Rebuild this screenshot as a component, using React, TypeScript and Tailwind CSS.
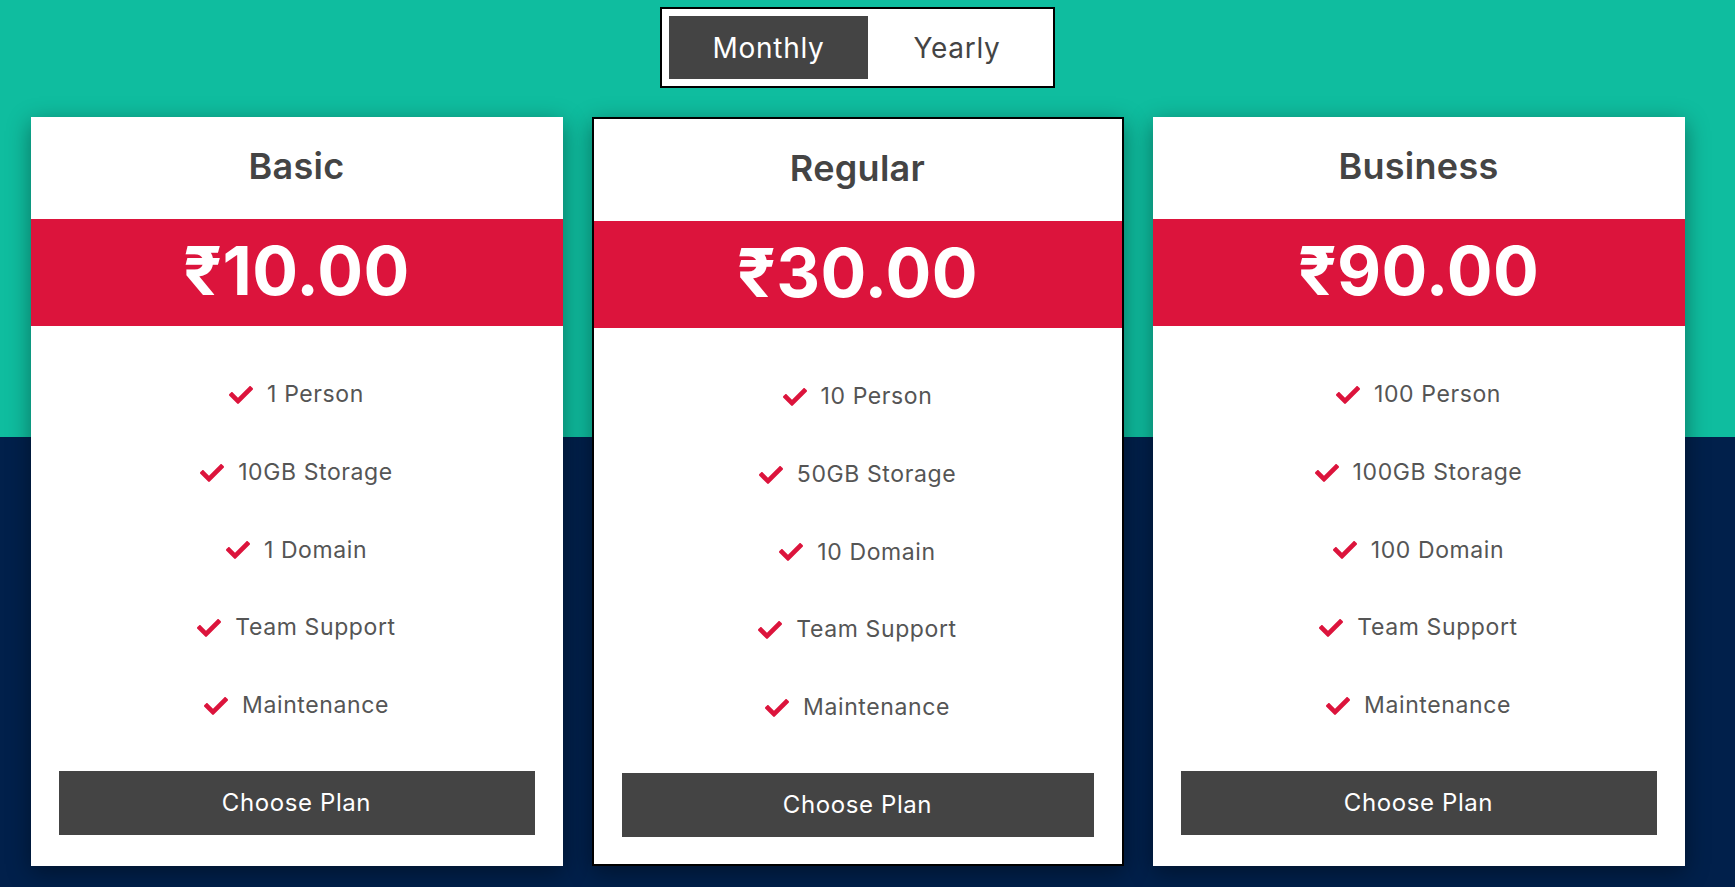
import React from "react";
import { FaCheck } from "react-icons/fa";

type Plan = {
  name: string;
  price: string;
  features: string[];
  featured?: boolean;
};

const plans: Plan[] = [
  {
    name: "Basic",
    price: "₹10.00",
    features: ["1 Person", "10GB Storage", "1 Domain", "Team Support", "Maintenance"],
  },
  {
    name: "Regular",
    price: "₹30.00",
    features: ["10 Person", "50GB Storage", "10 Domain", "Team Support", "Maintenance"],
    featured: true,
  },
  {
    name: "Business",
    price: "₹90.00",
    features: ["100 Person", "100GB Storage", "100 Domain", "Team Support", "Maintenance"],
  },
];

function Card({ plan }: { plan: Plan }) {
  return (
    <div
      className={
        plan.featured
          ? "w-[532px] h-[749px] bg-white border-2 border-black flex flex-col shadow-[0_6px_22px_rgba(0,0,0,0.4)]"
          : "w-[532px] h-[749px] bg-white flex flex-col shadow-[0_6px_22px_rgba(0,0,0,0.4)]"
      }
    >
      <div className="h-[102px] flex items-center justify-center pb-[4px]">
        <h2 className="text-[36px] font-semibold text-[#444444] leading-none tracking-[0.3px]">{plan.name}</h2>
      </div>
      <div className="h-[107px] bg-[#dc143c] flex items-center justify-center pb-[6px]">
        <span className="text-[68px] font-bold text-white leading-none tracking-[0.3px]">{plan.price}</span>
      </div>
      <ul className="pt-[30px] flex flex-col">
        {plan.features.map((f) => (
          <li key={f} className="h-[77.7px] flex items-center justify-center gap-[14px]">
            <FaCheck className="text-[#dc143c] w-[24px] h-[24px]" />
            <span className="text-[23px] text-[#555555] leading-none tracking-[0.6px]">{f}</span>
          </li>
        ))}
      </ul>
      <div className="mt-[27px] px-[28px]">
        <button className="w-full h-[64px] bg-[#444444] text-white text-[24px] tracking-[0.6px] flex items-center justify-center">
          Choose Plan
        </button>
      </div>
    </div>
  );
}

export default function App() {
  return (
    <div
      className="min-h-screen w-full bg-[linear-gradient(to_bottom,#0fbd9f_437px,#01204b_437px)]"
      style={{ fontFamily: "Inter, 'Noto Sans', sans-serif" }}
    >
      <div className="w-[1715px] flex flex-col items-center pt-[7px]">
        <div className="flex bg-white border-2 border-black p-[7px]">
          <button className="w-[199px] h-[63px] bg-[#444444] text-white text-[28px] tracking-[0.7px] flex items-center justify-center">
            Monthly
          </button>
          <button className="w-[178px] h-[63px] text-[#444444] text-[28px] tracking-[0.7px] flex items-center justify-center">
            Yearly
          </button>
        </div>
        <div className="mt-[29px] flex gap-[29px] justify-center">
          {plans.map((p) => (
            <Card key={p.name} plan={p} />
          ))}
        </div>
      </div>
    </div>
  );
}
